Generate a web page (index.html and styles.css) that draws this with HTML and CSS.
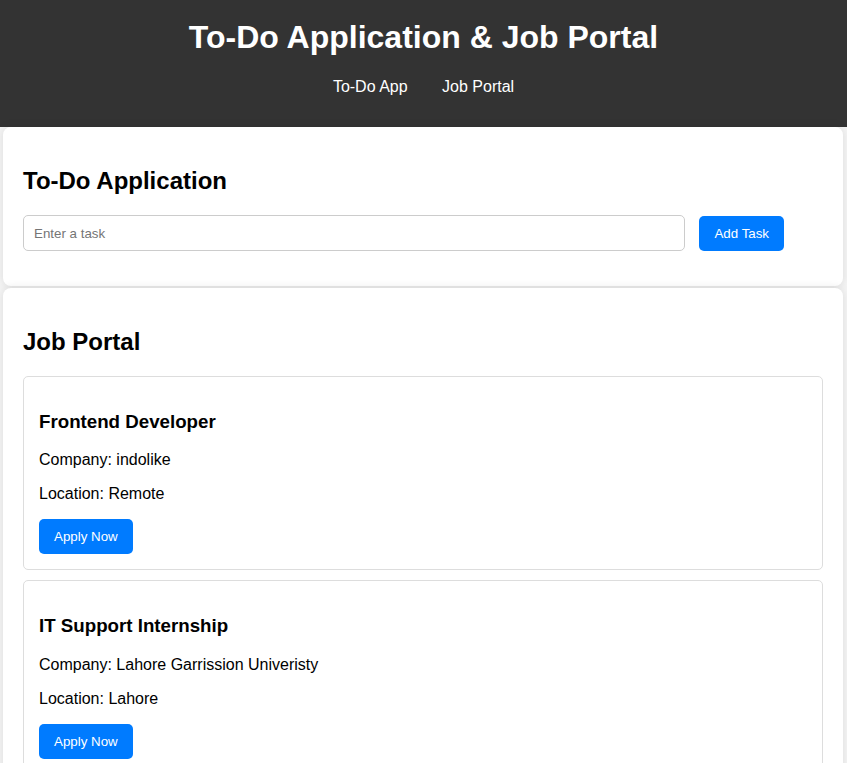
FILE: index.html
```html
<!DOCTYPE html>
<html lang="en">
<head>
<meta charset="UTF-8">
<title>To-Do Application &amp; Job Portal</title>
<link rel="stylesheet" href="styles.css">
</head>
<body>
<header class="site-header">
  <h1 class="site-title">To-Do Application &amp; Job Portal</h1>
  <nav class="site-nav">
    <a href="#todo" class="nav-link">To-Do App</a>
    <a href="#jobs" class="nav-link">Job Portal</a>
  </nav>
</header>

<section class="panel" id="todo">
  <h2 class="panel-title">To-Do Application</h2>
  <div class="todo-form">
    <input type="text" class="task-input" placeholder="Enter a task">
    <button class="btn btn-add">Add Task</button>
  </div>
  <ul class="task-list"></ul>
</section>

<section class="panel" id="jobs">
  <h2 class="panel-title">Job Portal</h2>
  <div class="job-card">
    <h3 class="job-title">Frontend Developer</h3>
    <p class="job-meta">Company: indolike</p>
    <p class="job-meta">Location: Remote</p>
    <button class="btn">Apply Now</button>
  </div>
  <div class="job-card">
    <h3 class="job-title">IT Support Internship</h3>
    <p class="job-meta">Company: Lahore Garrission Univeristy</p>
    <p class="job-meta">Location: Lahore</p>
    <button class="btn">Apply Now</button>
  </div>
</section>
</body>
</html>
```

FILE: styles.css
```css
* {
  box-sizing: content-box;
}

body {
  margin: 0;
  background: #f4f4f4;
  font-family: "Liberation Sans", Arial, sans-serif;
  color: #000;
}

.site-header {
  background: #333;
  color: #fff;
  text-align: center;
  padding: 19px 0 31px;
}

.site-title {
  margin: 0 0 22px;
  font-size: 32px;
  font-weight: bold;
}

.site-nav {
  font-size: 16px;
}

.nav-link {
  color: #fff;
  text-decoration: none;
  margin: 0 15px;
}

.panel {
  background: #fff;
  margin: 0 4px 2px 3px;
  padding: 20px;
  border-radius: 8px;
  box-shadow: 0 0 10px rgba(0, 0, 0, 0.1);
}

.panel-title {
  font-size: 24px;
  margin: 20px 0;
}

.todo-form {
  display: block;
}

.task-input {
  width: 80%;
  height: 34px;
  padding: 0 10px;
  border: 1px solid #ccc;
  border-radius: 5px;
  font-family: "Liberation Sans", Arial, sans-serif;
  font-size: 13.33px;
  vertical-align: middle;
  margin: 0;
}

.task-input::placeholder {
  color: #757575;
}

.btn {
  background: #007bff;
  color: #fff;
  border: none;
  border-radius: 5px;
  padding: 10px 15px;
  font-family: "Liberation Sans", Arial, sans-serif;
  font-size: 13.33px;
  cursor: pointer;
}

.btn-add {
  margin-left: 10px;
  vertical-align: middle;
}

.task-list {
  margin: 15px 0;
  padding: 0;
  list-style: none;
}

.job-card {
  border: 1px solid #ddd;
  border-radius: 5px;
  padding: 15px;
  margin-bottom: 10px;
}

.job-title {
  font-size: 18.72px;
  margin: 18.72px 0;
}

.job-meta {
  font-size: 16px;
  margin: 16px 0;
}
```
